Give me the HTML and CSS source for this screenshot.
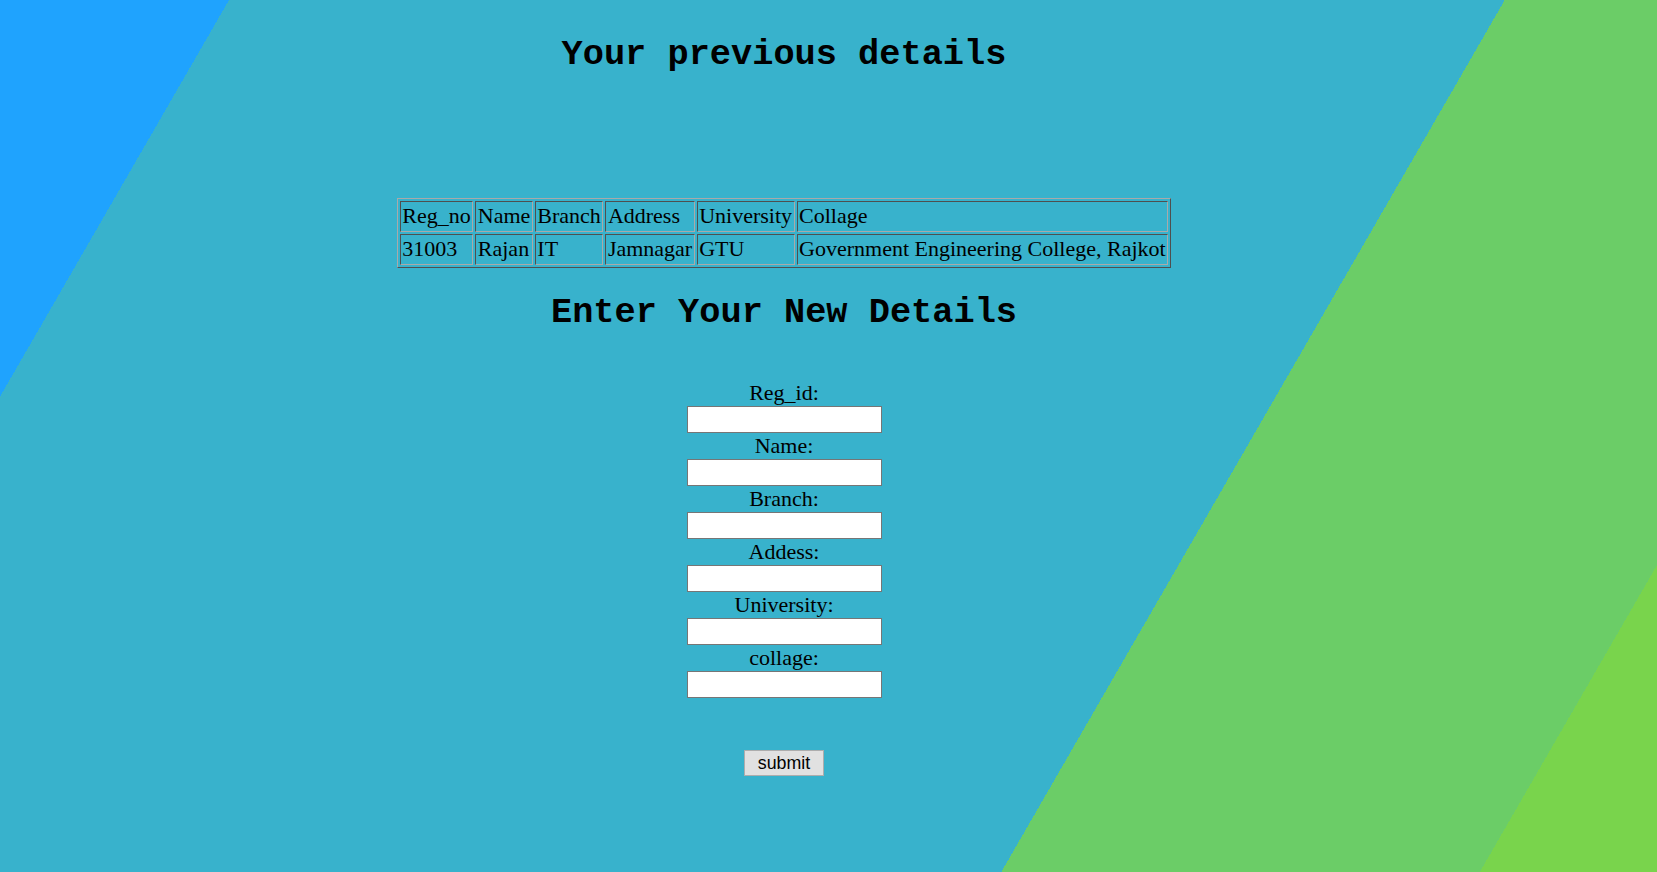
FILE: index.html
```html
<!DOCTYPE html>
<html lang="en">
<head>
<meta charset="utf-8">
<title>Update details</title>
<link rel="stylesheet" href="styles.css">
</head>
<body>
<div class="page">
  <main class="content">
    <h1 class="title">Your previous details</h1>
    <table class="details">
      <tr>
        <td>Reg_no</td>
        <td>Name</td>
        <td>Branch</td>
        <td>Address</td>
        <td>University</td>
        <td>Collage</td>
      </tr>
      <tr>
        <td>31003</td>
        <td>Rajan</td>
        <td>IT</td>
        <td>Jamnagar</td>
        <td>GTU</td>
        <td>Government Engineering College, Rajkot</td>
      </tr>
    </table>
    <h1 class="title title-form">Enter Your New Details</h1>
    <form class="form">
      <label class="field-label" for="reg">Reg_id:</label>
      <input class="field-input" id="reg" type="text">
      <label class="field-label" for="name">Name:</label>
      <input class="field-input" id="name" type="text">
      <label class="field-label" for="branch">Branch:</label>
      <input class="field-input" id="branch" type="text">
      <label class="field-label" for="address">Addess:</label>
      <input class="field-input" id="address" type="text">
      <label class="field-label" for="university">University:</label>
      <input class="field-input" id="university" type="text">
      <label class="field-label" for="collage">collage:</label>
      <input class="field-input" id="collage" type="text">
      <button class="submit" type="button">submit</button>
    </form>
  </main>
</div>
</body>
</html>
```

FILE: styles.css
```css
html, body {
  margin: 0;
  padding: 0;
}

.page {
  min-height: 100vh;
  background: linear-gradient(120deg,
    #1fa3fe 0%, #1fa3fe 10.6%,
    #38b2cc 10.6%, #38b2cc 69.65%,
    #6bcd67 69.65%, #6bcd67 91.8%,
    #79d44c 91.8%, #79d44c 100%);
}

.content {
  width: 1568px;
  padding-top: 35px;
  text-align: center;
  color: #000;
}

.title {
  margin: 0;
  font-family: "Liberation Mono", "Courier New", monospace;
  font-weight: bold;
  font-size: 35.3px;
  line-height: 40px;
  text-align: center;
}

.details {
  margin: 123px auto 0;
  border-collapse: separate;
  border-spacing: 2px;
  border: 1px solid;
  border-color: #a9a9a9 #4f4f4f #4f4f4f #a9a9a9;
  font-family: "Liberation Serif", "Times New Roman", serif;
  font-size: 22px;
}

.details td {
  border: 1px solid;
  border-color: #4f4f4f #a9a9a9 #a9a9a9 #4f4f4f;
  padding: 0 1.5px 2px;
  line-height: 27px;
  text-align: left;
  white-space: nowrap;
}

.title-form {
  margin-top: 25px;
}

.form {
  margin-top: 47px;
  display: flex;
  flex-direction: column;
  align-items: center;
}

.field-label {
  display: block;
  font-family: "Liberation Serif", "Times New Roman", serif;
  font-size: 22px;
  line-height: 26px;
}

.field-input {
  box-sizing: border-box;
  width: 195px;
  height: 27px;
  margin: 0;
  padding: 0 2px;
  border: 1px solid #767676;
  background: #fff;
}

.submit {
  margin-top: 52px;
  box-sizing: border-box;
  width: 80px;
  height: 26px;
  padding: 0;
  font-family: "Liberation Sans", Arial, sans-serif;
  font-size: 17.8px;
  color: #000;
  background: #e1e1e1;
  border: 1px solid #adadad;
}
```
